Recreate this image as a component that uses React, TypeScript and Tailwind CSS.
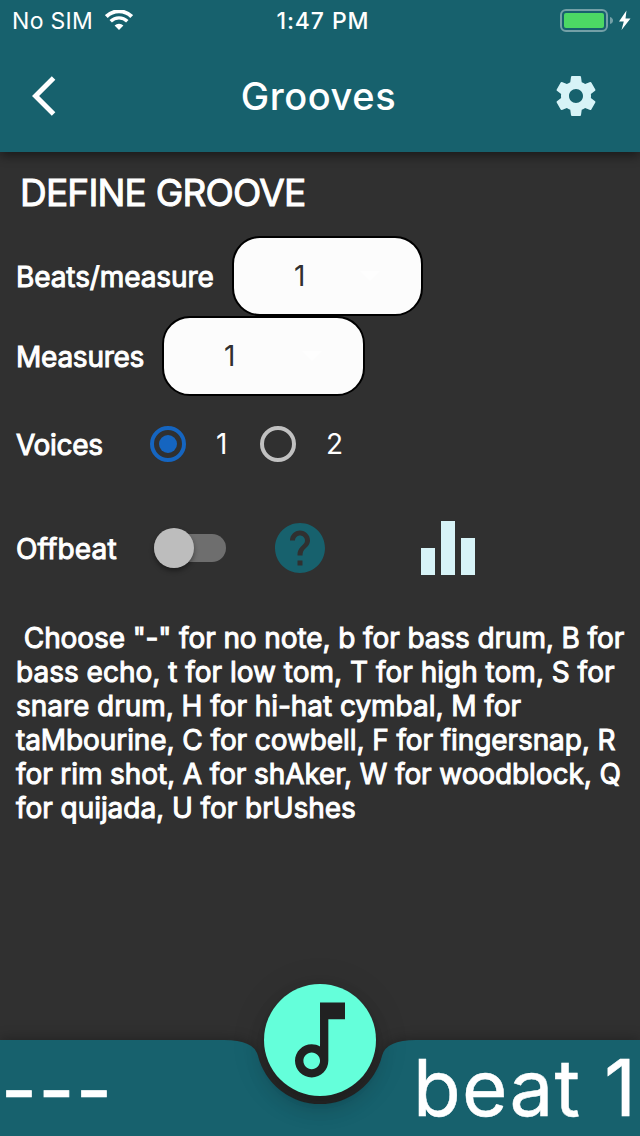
import type { ReactNode } from "react";

const faux = "[-webkit-text-stroke:1px_#fff]";

const helpLines = [
  { text: " Choose \"-\" for no note, b for bass drum, B for", tracking: "tracking-[-0.1px]" },
  { text: "bass echo, t for low tom, T for high tom, S for", tracking: "tracking-[0px]" },
  { text: "snare drum, H for hi-hat cymbal, M for", tracking: "tracking-[-0.04px]" },
  { text: "taMbourine, C for cowbell, F for fingersnap, R", tracking: "tracking-[-0.09px]" },
  { text: "for rim shot, A for shAker, W for woodblock, Q", tracking: "tracking-[-0.1px]" },
  { text: "for quijada, U for brUshes", tracking: "tracking-[-0.05px]" },
];

function StatusBar() {
  return (
    <div className="flex h-10 items-center justify-between pl-3 pr-2">
      <div className="flex w-[200px] items-center">
        <span className="w-[93px] whitespace-nowrap pt-px text-[23px] leading-10 tracking-[0.3px]">No SIM</span>
        <svg className="h-5 w-7" viewBox="0 0 28 20" fill="none" stroke="#fff">
          <path d="M1.300 6.600a18 18 0 0 1 25.400 0" strokeWidth="4" />
          <path d="M5.700 11.300a11.800 11.800 0 0 1 16.600 0" strokeWidth="3.4" />
          <path d="M14 20l-4.400-4.500a6.200 6.200 0 0 1 8.800 0z" fill="#fff" stroke="none" />
        </svg>
      </div>
      <span className="whitespace-nowrap pl-0.5 pt-px text-[23px] font-medium leading-10 tracking-[0.9px]">1:47 PM</span>
      <div className="flex w-[200px] items-center justify-end">
        <svg className="h-6 w-[72px]" viewBox="0 0 72 24">
          <rect x="1" y="2" width="46" height="21" rx="5" fill="none" stroke="#74a0a7" strokeWidth="2" />
          <rect x="4" y="5" width="40" height="15" rx="2" fill="#4cd964" />
          <path d="M50 9q3 1 3 3.500t-3 3.500z" fill="#74a0a7" />
          <path d="M66.500 2.500L59 13.500h4.800L61.500 22 70.500 10.500h-5z" fill="#fff" />
        </svg>
      </div>
    </div>
  );
}

function Toolbar() {
  return (
    <div className="flex h-28 items-center justify-between pl-8 pr-10">
      <svg className="h-12 w-12" viewBox="0 0 24 24" fill="#fff">
        <path d="M11.670 3.870L9.900 2.100 0 12l9.900 9.900 1.770-1.770L3.540 12z" />
      </svg>
      <h1 className="pl-[5px] text-[38px] font-medium leading-none tracking-[0.6px]">Grooves</h1>
      <svg className="h-12 w-12" viewBox="0 0 24 24" fill="#d7f3f7">
        <path d="M19.43 12.98c.04-.32.07-.64.07-.98s-.03-.66-.07-.98l2.110-1.650c.19-.15.24-.42.12-.64l-2-3.460c-.12-.22-.39-.3-.61-.22l-2.490 1c-.52-.4-1.080-.73-1.690-.98l-.38-2.650C14.460 2.180 14.250 2 14 2h-4c-.25 0-.46.18-.49.42l-.38 2.650c-.61.25-1.170.59-1.690.98l-2.490-1c-.23-.09-.49 0-.61.22l-2 3.460c-.13.22-.07.49.12.64l2.110 1.650c-.04.32-.07.65-.07.98s.03.66.07.98l-2.110 1.650c-.19.15-.24.42-.12.64l2 3.460c.12.22.39.3.61.22l2.490-1c.52.4 1.080.73 1.690.98l.38 2.650c.03.24.24.42.49.42h4c.25 0 .46-.18.49-.42l.38-2.650c.61-.25 1.170-.59 1.690-.98l2.490 1c.23.09.49 0 .61-.22l2-3.460c.12-.22.07-.49-.12-.64l-2.110-1.650zM12 15.500c-1.930 0-3.500-1.570-3.500-3.500s1.570-3.500 3.500-3.500 3.500 1.570 3.500 3.500-1.570 3.500-3.500 3.500z" />
      </svg>
    </div>
  );
}

function Label({ className, children }: { className: string; children: ReactNode }) {
  return (
    <span className={`${className} ${faux} shrink-0 whitespace-nowrap pt-0.5 text-[28px] leading-8`}>
      {children}
    </span>
  );
}

function SelectBox({ box, arrow }: { box: string; arrow: string }) {
  return (
    <button className={`${box} flex h-20 items-center rounded-[28px] border-2 border-black bg-[#fcfcfc] pl-[60px] text-left text-[28px] text-[#303030]`}>
      <span className="w-[18px]">1</span>
      <svg className={`${arrow} h-2.5 w-5`} viewBox="0 0 20 10" fill="#fefefe">
        <path d="M0 0h20L10 10z" />
      </svg>
    </button>
  );
}

function Radio({ on }: { on: boolean }) {
  return on ? (
    <span className="flex size-9 items-center justify-center rounded-full border-4 border-[#1565c0]">
      <span className="size-[18px] rounded-full bg-[#1565c0]" />
    </span>
  ) : (
    <span className="size-9 rounded-full border-4 border-[#c1c1c1]" />
  );
}

function BottomBar() {
  return (
    <footer className="relative h-24 shrink-0">
      <svg className="absolute inset-0 h-24 w-full overflow-visible drop-shadow-[0_-2px_6px_rgba(0,0,0,0.25)]" viewBox="0 0 640 96" fill="#17616d">
        <path d="M0 0H224Q254 0 257.900 15.600A64 64 0 0 0 382.100 15.600Q386 0 416 0H640V96H0z" />
      </svg>
      <button className="absolute -top-14 left-[264px] flex size-28 items-center justify-center rounded-full bg-[#64ffda] shadow-[0_6px_10px_-2px_rgba(0,0,0,0.2),0_12px_20px_0_rgba(0,0,0,0.14),0_4px_36px_0_rgba(0,0,0,0.12)]">
        <svg className="size-[100px] shrink-0" viewBox="0 0 24 24" fill="#212121">
          <path d="M12 3l.01 10.550c-.59-.34-1.270-.55-2-.55C7.790 13 6 14.790 6 17s1.790 4 4.010 4S14 19.210 14 17V7h4V3h-6zm-1.990 16c-1.100 0-2-.9-2-2s.9-2 2-2 2 .9 2 2-.9 2-2 2z" />
        </svg>
      </button>
      <div className="relative flex h-24 items-center justify-between overflow-hidden whitespace-nowrap text-[78px] leading-[96px]">
        <span className="pl-px pt-1 tracking-[1.6px] [-webkit-text-stroke:0.7px_#fff]">---</span>
        <span className="w-[227px] tracking-[1.2px] [-webkit-text-stroke:0.5px_#fff]">beat 1</span>
      </div>
    </footer>
  );
}

export default function App() {
  return (
    <div className="flex h-[1136px] w-[640px] flex-col overflow-hidden bg-[#303030] font-['Inter',sans-serif] text-white">
      <header className="h-[152px] shrink-0 bg-[#17616d] shadow-[0_4px_10px_rgba(0,0,0,0.45)]">
        <StatusBar />
        <Toolbar />
      </header>
      <main className="flex flex-1 flex-col pl-4">
        <h2 className={`${faux} ml-1 h-[84px] whitespace-nowrap pt-[18px] text-[37px] leading-[46px] tracking-[-0.8px]`}>DEFINE GROOVE</h2>
        <div className="flex h-20 items-center">
          <Label className="w-[216px] tracking-[-0.1px]">Beats/measure</Label>
          <SelectBox box="w-[191px]" arrow="ml-[48px]" />
        </div>
        <div className="flex h-20 items-center">
          <Label className="w-[146px] tracking-[-0.25px]">Measures</Label>
          <SelectBox box="w-[203px]" arrow="ml-[60px]" />
        </div>
        <div className="flex h-24 items-center text-[28px]">
          <Label className="w-[134px] tracking-[-0.3px]">Voices</Label>
          <Radio on />
          <span className="ml-[30px] w-11">1</span>
          <Radio on={false} />
          <span className="ml-[30px]">2</span>
        </div>
        <div className="flex h-28 items-center">
          <Label className="w-[138px] tracking-[0.15px]">Offbeat</Label>
          <div className="flex h-7 w-[72px] items-center rounded-full bg-[#6e6e6e]">
            <span className="size-10 rounded-full bg-[#bdbdbd] shadow-[0_3px_5px_rgba(0,0,0,0.4)]" />
          </div>
          <svg className="ml-11 size-[60px]" viewBox="0 0 24 24" fill="#17616d">
            <path d="M12 2C6.480 2 2 6.480 2 12s4.480 10 10 10 10-4.480 10-10S17.520 2 12 2zm1 17h-2v-2h2v2zm2.070-7.750l-.9.920C13.450 12.900 13 13.500 13 15h-2v-.5c0-1.100.45-2.100 1.170-2.830l1.240-1.260c.37-.36.59-.86.59-1.410 0-1.100-.9-2-2-2s-2 .9-2 2H8c0-2.210 1.790-4 4-4s4 1.790 4 4c0 .88-.36 1.680-.93 2.250z" />
          </svg>
          <svg className="ml-[91px] h-[54px] w-[54px]" viewBox="0 0 54 54" fill="#d7f3f7">
            <path d="M0 27h14v27H0zM20 0h14v54H20zM40 17h14v37H40z" />
          </svg>
        </div>
        <p className={`${faux} mt-[17px] whitespace-pre text-[28px] leading-[34px]`}>
          {helpLines.map((line) => (
            <span key={line.text} className={`${line.tracking} block`}>{line.text}</span>
          ))}
        </p>
      </main>
      <BottomBar />
    </div>
  );
}
